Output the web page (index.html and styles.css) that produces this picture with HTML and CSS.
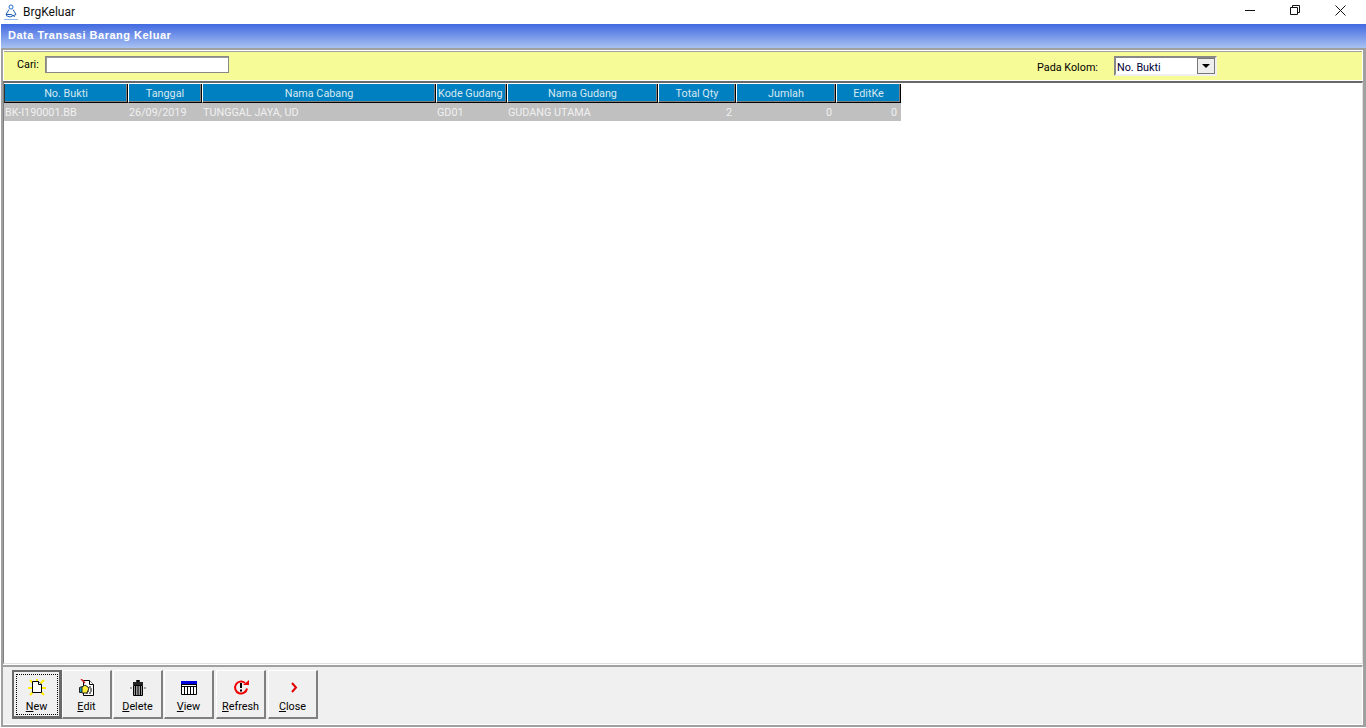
FILE: index.html
```html
<!DOCTYPE html>
<html lang="id">
<head>
<meta charset="utf-8">
<title>BrgKeluar</title>
<link rel="stylesheet" href="styles.css">
</head>
<body>
<div class="window">
  <div class="titlebar">
    <svg class="app-icon" width="14" height="16" viewBox="0 0 14 16" fill="none">
      <circle cx="7" cy="3" r="2" stroke="#2a6fd0"/>
      <path d="M5 5.500 2 10.500h5l4 2M9 5.500l3 5-6 2.500-4-1.500" stroke="#1f5fb8"/>
      <path d="M0 15.500h14" stroke="#8dbcec"/>
    </svg>
    <span class="app-title">BrgKeluar</span>
    <div class="win-controls">
      <svg width="11" height="11" viewBox="0 0 11 11"><path d="M0 5.500h10" stroke="#111" fill="none"/></svg>
      <svg width="11" height="11" viewBox="0 0 11 11"><path d="M.5 2.500h7v7h-7zM2.500 2.500v-2h7v7h-2" stroke="#111" fill="none"/></svg>
      <svg width="11" height="11" viewBox="0 0 11 11"><path d="M.5.500l10 10M10.500.500l-10 10" stroke="#111" fill="none"/></svg>
    </div>
  </div>
  <div class="banner">Data Transasi Barang Keluar</div>
  <div class="frame">
    <div class="search-panel">
      <label class="cari-label">Cari:</label>
      <div class="cari-input"></div>
      <label class="kolom-label">Pada Kolom:</label>
      <div class="combo">
        <span class="combo-text">No. Bukti</span>
        <span class="combo-btn"><span class="combo-arrow"></span></span>
      </div>
    </div>
    <div class="grid-panel">
      <div class="grid">
        <div class="th">No. Bukti</div>
        <div class="th">Tanggal</div>
        <div class="th">Nama Cabang</div>
        <div class="th th-tight">Kode Gudang</div>
        <div class="th">Nama Gudang</div>
        <div class="th">Total Qty</div>
        <div class="th">Jumlah</div>
        <div class="th">EditKe</div>
        <div class="td">BK-I190001.BB</div>
        <div class="td">26/09/2019</div>
        <div class="td">TUNGGAL JAYA, UD</div>
        <div class="td">GD01</div>
        <div class="td">GUDANG UTAMA</div>
        <div class="td num">2</div>
        <div class="td num">0</div>
        <div class="td num">0</div>
      </div>
    </div>
    <div class="toolbar">
      <button class="btn btn-default">
        <svg width="18" height="18" viewBox="0 0 18 18">
          <path d="M2 1l4 4M16 1l-4 4M0 9h4M14 9h4M2 16l3-3M16 16l-3-3M9 0v2" stroke="#ffec00" stroke-width="2" fill="none"/>
          <path d="M4.500 2.500h6l3 3v8h-9z" fill="#fff" stroke="#000"/><path d="M10.500 2.500v3h3" fill="#fff" stroke="#000"/>
        </svg>
        <span class="btn-label"><u>N</u>ew</span>
      </button>
      <button class="btn">
        <svg width="18" height="18" viewBox="0 0 18 18">
          <path d="M5.500 1.500h6l4 4v11h-10z" fill="#fff" stroke="#000"/>
          <path d="M11.500 1.500v4h4" fill="#fff" stroke="#000"/>
          <path d="M8 8h5M9 10h5M9 12h5M8 14h6" stroke="#000" stroke-dasharray="2 1" fill="none"/>
          <path d="M1.500 8.500l3-1v6h-3z" fill="#1d9ab5" stroke="#222"/>
          <path d="M4 8l3-2 4 3-2 5H4z" fill="#ffef3a" stroke="#222"/>
          <path d="M3 0l4 4" stroke="#d02020" stroke-width="1.500"/>
        </svg>
        <span class="btn-label"><u>E</u>dit</span>
      </button>
      <button class="btn">
        <svg width="18" height="18" viewBox="0 0 18 18">
          <path d="M7.500 1.500h3v1h-3z" fill="none" stroke="#000"/>
          <path d="M4 3h10v3H4z" fill="#222"/>
          <path d="M2 8v2M16 8v2" stroke="#555"/>
          <path d="M4.500 6.500h9v10h-9z" fill="#999" stroke="#000"/>
          <path d="M6.500 7v9M9 7v9M11.500 7v9" stroke="#000" fill="none"/>
        </svg>
        <span class="btn-label"><u>D</u>elete</span>
      </button>
      <button class="btn">
        <svg width="18" height="18" viewBox="0 0 18 18">
          <path d="M1.500 2.500h15v13h-15z" fill="#fff" stroke="#000"/>
          <path d="M1 2h16v3H1z" fill="#0000e0"/>
          <path d="M1 5.500h16M1 7.500h16M4.500 8v7M7.500 8v7M10.500 8v7M13.500 8v7" stroke="#000" fill="none"/>
        </svg>
        <span class="btn-label"><u>V</u>iew</span>
      </button>
      <button class="btn">
        <svg width="18" height="18" viewBox="0 0 18 18">
          <path d="M13 4A6 6 0 1 0 15 9.500" fill="none" stroke="#f00000" stroke-width="2"/>
          <path d="M11 6h6V1z" fill="#f00000"/>
          <path d="M8 4h2v5H8zM8 10.500h2v2H8z" fill="#000"/>
        </svg>
        <span class="btn-label"><u>R</u>efresh</span>
      </button>
      <button class="btn">
        <svg width="18" height="18" viewBox="0 0 18 18">
          <path d="M10 4l4 4.500-4 4.500" transform="translate(-2 0)" fill="none" stroke="#e00000" stroke-width="2"/>
        </svg>
        <span class="btn-label"><u>C</u>lose</span>
      </button>
    </div>
  </div>
</div>
</body>
</html>
```
FILE: styles.css
```css
* { box-sizing: border-box; }
html, body { margin: 0; height: 100%; overflow: hidden; background: #fff; }
body { font-family: Roboto, "Liberation Sans", Arial, sans-serif; font-size: 10.8px; color: #000; }
.window { width: 1366px; height: 728px; display: flex; flex-direction: column; }
.titlebar { height: 24px; flex: none; display: flex; align-items: center; padding-left: 4px; background: #fff; }
.app-icon { margin: 0 5px 0 0; }
.app-title { font-size: 12px; color: #111; }
.win-controls { margin-left: auto; align-self: flex-start; margin-top: 5px; display: flex; gap: 34px; padding-right: 20px; }
.banner { height: 24px; flex: none; margin-left: 1px; padding: 4px 0 0 7px; background: linear-gradient(#4169e1, #a9c2f2); color: #fff; font-family: "Liberation Sans", Arial, sans-serif; font-weight: bold; font-size: 11px; letter-spacing: .5px; line-height: 15px; }
.frame { flex: none; height: 679px; margin-left: 1px; display: flex; flex-direction: column; border: 2px solid #a0a0a0; border-right-width: 3px; border-bottom-width: 2px; background: #fff; }
.search-panel { height: 31px; flex: none; display: flex; align-items: flex-start; padding: 5px 0 0 13px; background: #f6fb98; border: 1px solid #fff; box-shadow: inset 0 1px 0 #a0a0a0; }
.cari-label { width: 28px; line-height: 18px; }
.cari-input { width: 184px; height: 17px; background: #fff; border: 1px solid #888; box-shadow: inset 1px 1px 0 #999; }
.kolom-label { margin: 4px 16px 0 auto; line-height: 16px; }
.combo { width: 103px; height: 20px; margin-right: 145px; display: flex; background: #fff; border: 2px solid #888; border-right-color: #f0f0f0; border-bottom-color: #f0f0f0; }
.combo-text { flex: 1; padding: 2px 0 0 1px; line-height: 15px; color: #000033; }
.combo-btn { width: 18px; background: #eee; border: 1px solid #777; display: flex; align-items: center; justify-content: center; }
.combo-arrow { width: 0; height: 0; border: 4px solid transparent; border-top: 4px solid #000; border-bottom: 0; }
.grid-panel { flex: 1; min-height: 0; padding-top: 1px; background: #fff; border-top: 2px solid #696969; border-left: 1px solid #808080; border-right: 1px solid #e0e0e0; border-bottom: 1px solid #e0e0e0; }
.grid { display: grid; grid-template-columns: 124px 74px 234px 71px 151px 78px 100px 65px; grid-template-rows: 19px 18px; width: 897px; }
.th { background: #0080c0; color: #d8e8f0; text-align: center; line-height: 19px; border-left: 1px solid #fff; border-right: 1px solid #000; border-bottom: 1px solid #000; box-shadow: inset -1px -1px 0 #808080; white-space: nowrap; overflow: hidden; }
.th:first-child { border-left-color: #333; }
.th-tight { text-align: left; padding-left: 1px; }
.td { background: #c0c0c0; color: #f0f0f0; line-height: 20px; padding-left: 1px; white-space: nowrap; overflow: hidden; }
.num { text-align: right; padding: 0 4px 0 0; }
.toolbar { height: 60px; flex: none; margin-top: 1px; padding: 3px 0 0 9px; display: flex; gap: 1px; align-items: flex-start; background: #f0f0f0; border-top: 2px solid #a0a0a0; border-bottom: 1px solid #fff; border-right: 1px solid #fff; }
.btn { width: 50px; height: 49px; padding: 8px 0 0; margin: 0; flex: none; display: flex; flex-direction: column; align-items: center; gap: 3px; font: inherit; color: #000; background: #f0f0f0; border: 1px solid #fff; border-right: 2px solid #808080; border-bottom: 2px solid #808080; }
.btn:nth-child(2) { margin-left: -1px; }
.btn:nth-child(n+5) { margin-left: 1px; }
.btn-default { outline: 1px dotted #000; outline-offset: -5px; border: 2px solid #696969; border-right-width: 3px; border-bottom-width: 3px; padding-top: 7px; }
.btn-label { line-height: 14px; }
```
